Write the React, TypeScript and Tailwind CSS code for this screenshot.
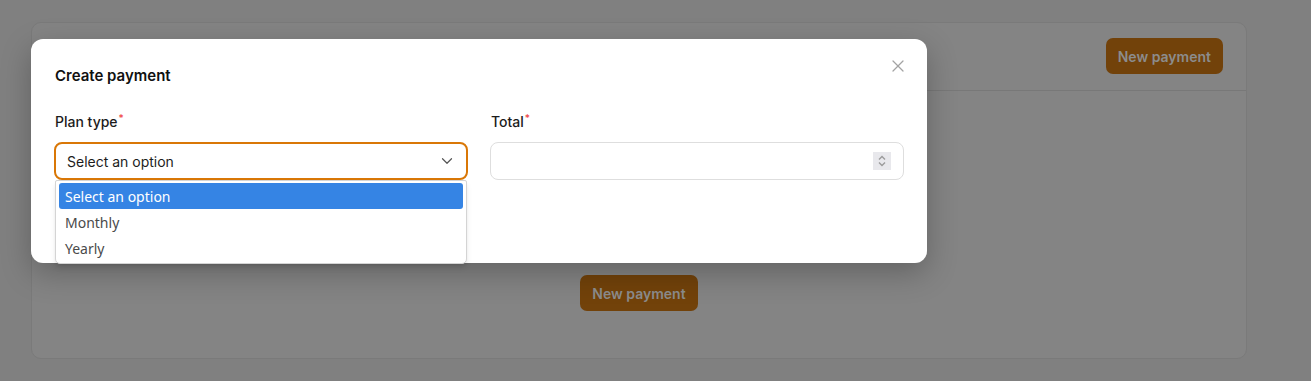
import { ChevronDown, X } from "lucide-react";

const options = ["Select an option", "Monthly", "Yearly"];

// Native-looking dropdown list shown under the open select
const OptionList = () => (
  <div className="absolute left-[1px] top-[38px] z-20 w-[412px] rounded-b-[5px] rounded-t-[2px] border border-[#d4d4d4] bg-white px-[3px] py-[2px] shadow-md [font-family:'Noto_Sans',sans-serif]">
    {options.map((opt, i) => (
      <div
        key={opt}
        className={`flex h-[26px] items-center rounded-[3px] px-[6px] text-[14px] ${
          i === 0 ? "bg-[#3584e4] text-white" : "text-[#4a4a4a]"
        }`}>
        {opt}
      </div>
    ))}
  </div>
);

const Label = ({ text }: { text: string }) => (
  <div className="mb-[10px] flex h-[20px] items-end pl-[1px] text-[14px] font-medium text-[#1c1c1c]">
    {text}
    <span className="relative -top-[6px] ml-[1px] text-[10px] text-[#ef4444]">*</span>
  </div>
);

export default function App() {
  return (
    <div className="relative h-[381px] w-full overflow-hidden bg-[#808080] px-[31px] pt-[22px] [font-family:Inter,sans-serif]">
      {/* Page card behind the overlay */}
      <div className="flex h-[337px] w-[1216px] flex-col rounded-[10px] border border-[#7a7a7a] bg-[#848484]">
        <div className="flex h-[68px] items-start justify-end border-b border-[#787878] px-[23px] pt-[15px]">
          <button className="h-[36px] rounded-[7px] bg-[#72420a] px-[12px] text-[14px] font-semibold text-[#8c8c8c]">
            New payment
          </button>
        </div>
        <div className="flex flex-1 justify-center pt-[184px]">
          <button className="h-[36px] rounded-[7px] bg-[#72420a] px-[12px] text-[14px] font-semibold text-[#8c8c8c]">
            New payment
          </button>
        </div>
      </div>

      {/* Modal */}
      <div className="absolute left-[31px] top-[39px] z-10 h-[224px] w-[896px] rounded-[12px] bg-white px-[23px] pt-[25px] shadow-[0_10px_30px_rgba(0,0,0,0.25)]">
        <div className="flex items-start justify-between">
          <h2 className="pl-[1px] text-[15px] font-semibold leading-[24px] text-[#111111]">
            Create payment
          </h2>
          <button className="-mr-[4px] -mt-[8px] text-[#a3a3a3]" aria-label="Close">
            <X size={20} strokeWidth={1.5} />
          </button>
        </div>

        <div className="mt-[24px] grid grid-cols-2 gap-[22px]">
          <div>
            <Label text="Plan type" />
            <div className="relative">
              <div className="flex h-[38px] items-center justify-between rounded-[8px] border-2 border-[#d97706] pl-[11px] pr-[10px] text-[14px] text-[#1c1c1c]">
                Select an option
                <ChevronDown size={18} strokeWidth={1.6} className="text-[#555]" />
              </div>
              <OptionList />
            </div>
          </div>
          <div>
            <Label text="Total" />
            <div className="flex h-[38px] items-center justify-end rounded-[8px] border border-[#dedede] pr-[12px]">
              <div className="flex h-[18px] w-[18px] flex-col items-center justify-center bg-[#e8e8ec]">
                <svg width="10" height="14" viewBox="0 0 10 14" fill="none" stroke="#9b9b9b" strokeWidth="1.4">
                  <path d="M2 5.5 5 2.5 8 5.5" />
                  <path d="M2 8.5 5 11.5 8 8.5" />
                </svg>
              </div>
            </div>
          </div>
        </div>
      </div>
    </div>
  );
}
